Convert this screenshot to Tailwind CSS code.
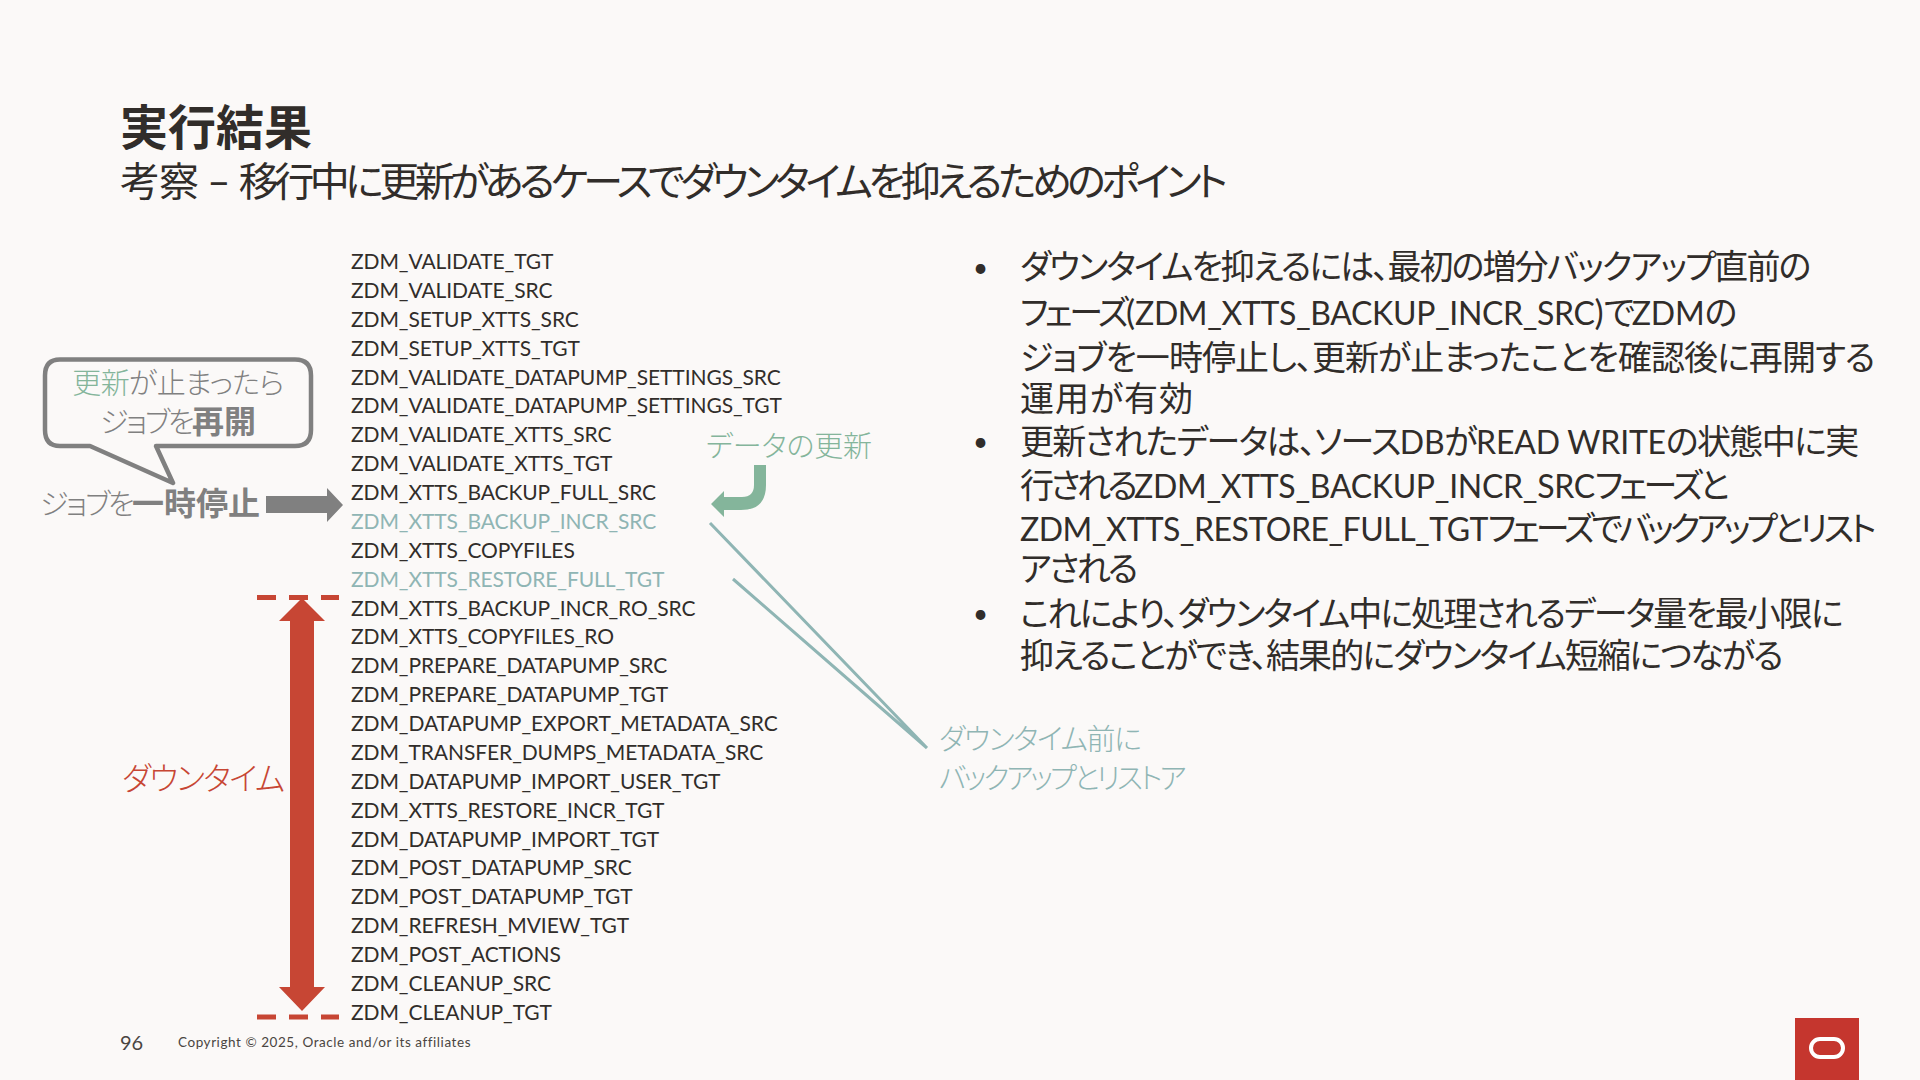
<!DOCTYPE html>
<html lang="ja">
<head>
<meta charset="utf-8">
<script src="https://cdn.jsdelivr.net/npm/@tailwindcss/browser@4"></script>
</head>
<body class="m-0">
<div class="relative w-[1920px] h-[1080px] overflow-hidden bg-[#fbf9f8] text-[#312d2a] font-['Lato','Noto_Sans_CJK_JP',sans-serif] [font-feature-settings:'palt'] flex flex-col">
  <header class="pt-[98px] pl-[120px] h-[247px] shrink-0">
    <h1 class="text-[48px] leading-[58px] font-bold m-0">実行結果</h1>
    <p class="text-[40px] leading-[50px] font-normal tracking-[-4.5px] m-0 whitespace-nowrap"><span class="tracking-[-1px]">考察 – </span>移行中に更新があるケースでダウンタイムを抑えるためのポイント</p>
  </header>
  <main class="flex flex-1 min-h-0">
    <ul class="w-[975px] shrink-0 pl-[351px] text-[21px] leading-[28.87px] tracking-[-0.08px] whitespace-nowrap">
      <li>ZDM_VALIDATE_TGT</li>
      <li>ZDM_VALIDATE_SRC</li>
      <li>ZDM_SETUP_XTTS_SRC</li>
      <li>ZDM_SETUP_XTTS_TGT</li>
      <li>ZDM_VALIDATE_DATAPUMP_SETTINGS_SRC</li>
      <li>ZDM_VALIDATE_DATAPUMP_SETTINGS_TGT</li>
      <li>ZDM_VALIDATE_XTTS_SRC</li>
      <li>ZDM_VALIDATE_XTTS_TGT</li>
      <li>ZDM_XTTS_BACKUP_FULL_SRC</li>
      <li class="text-[#8fb5b4]">ZDM_XTTS_BACKUP_INCR_SRC</li>
      <li>ZDM_XTTS_COPYFILES</li>
      <li class="text-[#8fb5b4]">ZDM_XTTS_RESTORE_FULL_TGT</li>
      <li>ZDM_XTTS_BACKUP_INCR_RO_SRC</li>
      <li>ZDM_XTTS_COPYFILES_RO</li>
      <li>ZDM_PREPARE_DATAPUMP_SRC</li>
      <li>ZDM_PREPARE_DATAPUMP_TGT</li>
      <li>ZDM_DATAPUMP_EXPORT_METADATA_SRC</li>
      <li>ZDM_TRANSFER_DUMPS_METADATA_SRC</li>
      <li>ZDM_DATAPUMP_IMPORT_USER_TGT</li>
      <li>ZDM_XTTS_RESTORE_INCR_TGT</li>
      <li>ZDM_DATAPUMP_IMPORT_TGT</li>
      <li>ZDM_POST_DATAPUMP_SRC</li>
      <li>ZDM_POST_DATAPUMP_TGT</li>
      <li>ZDM_REFRESH_MVIEW_TGT</li>
      <li>ZDM_POST_ACTIONS</li>
      <li>ZDM_CLEANUP_SRC</li>
      <li>ZDM_CLEANUP_TGT</li>
    </ul>
    <div class="-mt-[3px] -ml-[2px] text-[34px] font-normal whitespace-nowrap flex flex-col">
      <div class="flex gap-[35px]"><span class="w-[12px] text-center text-[26px] leading-[47px]">•</span><div>
        <p class="leading-[43.6px] tracking-[-1.9px]">ダウンタイムを抑えるには、最初の増分バックアップ直前の</p>
        <p class="leading-[48.4px] tracking-[-3.4px]">フェーズ<span class="tracking-[0px]">(</span><span class="text-[32px] tracking-[-0.35px]">ZDM_XTTS_BACKUP_INCR_SRC</span><span class="tracking-[0px]">)</span>で<span class="text-[32px] tracking-[-0.2px]">ZDM</span>の</p>
        <p class="leading-[39.6px] tracking-[-0.95px]">ジョブを一時停止し、更新が止まったことを確認後に再開する</p>
        <p class="leading-[41px] tracking-[0.9px]">運用が有効</p>
      </div></div>
      <div class="flex gap-[35px]"><span class="w-[12px] text-center text-[26px] leading-[47px]">•</span><div>
        <p class="leading-[45.6px] tracking-[-1.65px]">更新されたデータは、ソース<span class="text-[32px] tracking-[-0.2px]">DB</span>が<span class="text-[32px] tracking-[-0.2px]">READ WRITE</span>の状態中に実</p>
        <p class="leading-[42.4px] tracking-[-3.7px]">行される<span class="text-[32px] tracking-[-0.3px]">ZDM_XTTS_BACKUP_INCR_SRC</span>フェーズと</p>
        <p class="leading-[40.6px] tracking-[-4px]"><span class="text-[32px] tracking-[-0.5px]">ZDM_XTTS_RESTORE_FULL_TGT</span>フェーズでバックアップとリスト</p>
        <p class="leading-[38.4px] tracking-[-2.7px]">アされる</p>
      </div></div>
      <div class="flex gap-[35px]"><span class="w-[12px] text-center text-[26px] leading-[51px]">•</span><div>
        <p class="leading-[49.6px] tracking-[-1.96px]">これにより、ダウンタイム中に処理されるデータ量を最小限に</p>
        <p class="leading-[36.4px] tracking-[-1.85px]">抑えることができ、結果的にダウンタイム短縮につながる</p>
      </div></div>
    </div>
  </main>

  <!-- annotations drawn over the slide -->
  <svg class="absolute inset-0 pointer-events-none" width="1920" height="1080" viewBox="0 0 1920 1080" fill="none">
    <path d="M60 359.5H295Q311 359.5 311 375.5V430Q311 446 295 446H156L173 483L90 446H60Q45 446 45 430V375.5Q45 359.5 60 359.5Z" stroke="#808080" stroke-width="4.5" stroke-linejoin="round"/>
    <path d="M266 496H327V488L343 505L327 522V513H266Z" fill="#808080"/>
    <path d="M754 465H766V485Q766 510 741 510H724V517L711 504L724 491V497H742Q754 497 754 485Z" fill="#84b59b"/>
    <path d="M710 523L927 748M733 579L927 748" stroke="#8fb5b4" stroke-width="3"/>
    <path d="M257 597.5H339M257 1017H339" stroke="#c74634" stroke-width="5" stroke-dasharray="19 13"/>
    <path d="M302 598L325 621H314V987H325L302 1011L279 987H290V621H279Z" fill="#c74634"/>
  </svg>
  <div class="absolute left-[46px] top-[360px] w-[264px] h-[84px] flex flex-col items-center text-[#808080] text-[29px] leading-[38px] font-light whitespace-nowrap pt-[4px]">
    <p class="tracking-[-0.7px]"><span class="text-[#84b59b]">更新</span>が止まったら</p>
    <p class="tracking-[-2.5px]">ジョブを<b class="font-bold text-[32px] tracking-[0px]">再開</b></p>
  </div>
  <p class="absolute left-[40px] top-[484px] text-[#808080] text-[29px] leading-[38px] font-light tracking-[-2.5px] whitespace-nowrap">ジョブを<b class="font-bold text-[32px] tracking-[0px]">一時停止</b></p>
  <p class="absolute left-[706px] top-[427px] text-[#84b59b] text-[29px] leading-[38px] font-light tracking-[-0.2px] whitespace-nowrap">データの更新</p>
  <p class="absolute left-[122px] top-[758px] text-[#c74634] text-[32px] leading-[40px] font-light tracking-[-1.8px] whitespace-nowrap">ダウンタイム</p>
  <div class="absolute left-[939px] top-[719px] text-[#8fb5b4] text-[29px] leading-[39px] font-light whitespace-nowrap">
    <p class="tracking-[-1.4px]">ダウンタイム前に</p>
    <p class="tracking-[-3px]">バックアップとリストア</p>
  </div>
  <span class="absolute left-[120px] top-[1030px] text-[20px] leading-[24px] text-[#4a4541]">96</span>
  <span class="absolute left-[178px] top-[1033px] text-[13.5px] leading-[18px] tracking-[0.56px] text-[#4a4541] whitespace-nowrap">Copyright © 2025, Oracle and/or its affiliates</span>
  <div class="absolute left-[1795px] top-[1018px] w-[64px] h-[62px] bg-[#c5362e] flex items-center justify-center pb-[2px]">
    <div class="w-[36px] h-[22px] rounded-[11px] border-[4px] border-white"></div>
  </div>
</div>
</body>
</html>
